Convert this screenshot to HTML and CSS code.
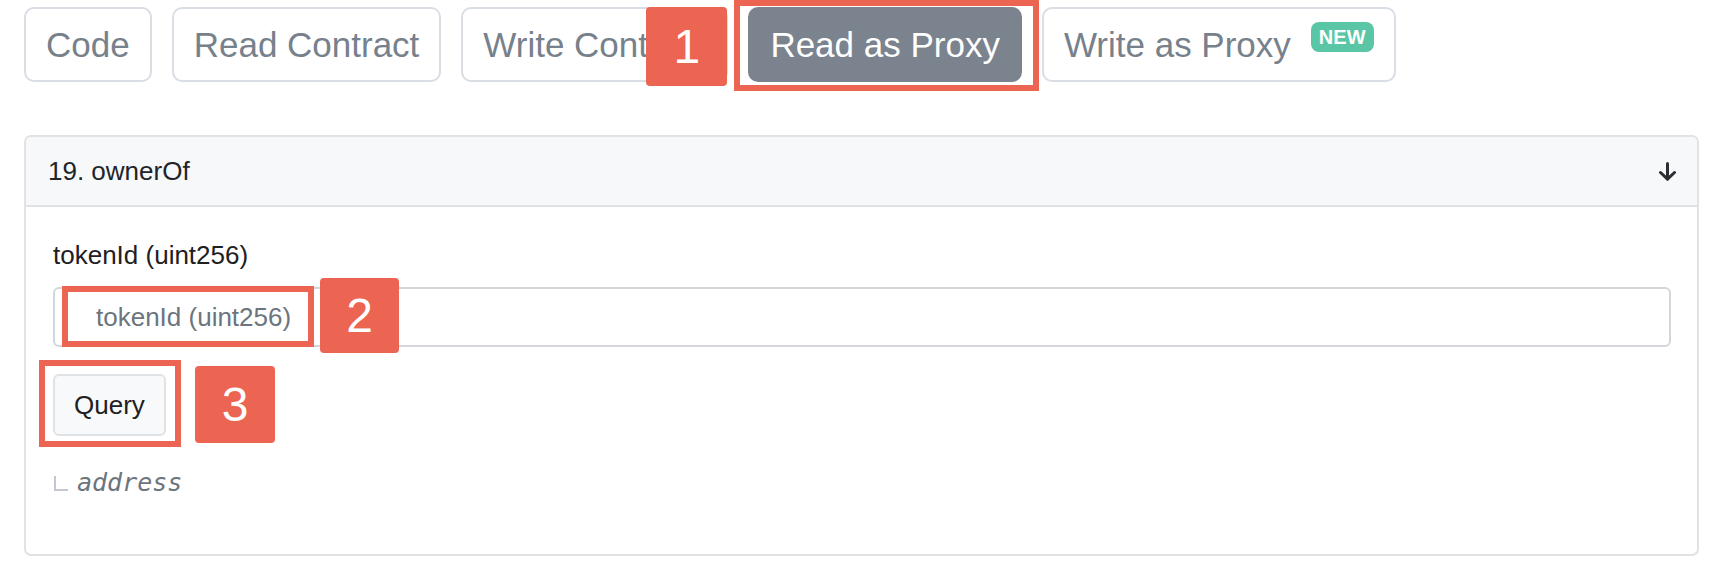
FILE: index.html
```html
<!DOCTYPE html>
<html lang="en">
<head>
<meta charset="utf-8">
<title>Read as Proxy</title>
<link rel="stylesheet" href="styles.css">
</head>
<body>
  <nav class="tabs">
    <button class="tab">Code</button>
    <button class="tab">Read Contract</button>
    <div class="tab-wrap">
      <button class="tab">Write Contract</button>
      <span class="marker marker-1">1</span>
    </div>
    <div class="tab-wrap">
      <button class="tab tab-active">Read as Proxy</button>
      <span class="hl hl-1"></span>
    </div>
    <button class="tab">Write as Proxy <span class="new">NEW</span></button>
  </nav>

  <section class="card">
    <header class="card-head">
      <span class="card-title">19. ownerOf</span>
      <svg class="arrow" width="19" height="19" viewBox="0 0 19 19" aria-hidden="true">
        <path d="M9.5 1.5 V17" fill="none" stroke="#2b2f33" stroke-width="3" stroke-linecap="round"/>
        <path d="M2.5 10.5 L9.5 17.2 L16.5 10.5" fill="none" stroke="#2b2f33" stroke-width="3" stroke-linecap="round" stroke-linejoin="round"/>
      </svg>
    </header>
    <div class="card-body">
      <label class="field-label">tokenId (uint256)</label>
      <div class="field-wrap">
        <input class="field" type="text" placeholder="tokenId (uint256)">
        <span class="hl hl-2"></span>
        <span class="marker marker-2">2</span>
      </div>
      <div class="query-row">
        <div class="query-wrap">
          <button class="query">Query</button>
          <span class="hl hl-3"></span>
          <span class="marker marker-3">3</span>
        </div>
      </div>
      <div class="output">
        <span class="elbow"></span><span class="type">address</span>
      </div>
    </div>
  </section>
</body>
</html>
```

FILE: styles.css
```css
* { box-sizing: border-box; }

body {
  margin: 0;
  background: #ffffff;
  font-family: "Liberation Sans", Arial, sans-serif;
  color: #212529;
}

.tabs {
  display: flex;
  align-items: flex-start;
  gap: 20px;
  padding: 7px 0 0 24px;
}

.tab-wrap {
  position: relative;
  display: flex;
}

.tab {
  display: inline-flex;
  align-items: center;
  height: 75px;
  padding: 0 20px;
  border: 2px solid #d9dde4;
  border-radius: 10px;
  background: #ffffff;
  color: #77818c;
  font-family: "Liberation Sans", Arial, sans-serif;
  font-size: 35px;
  white-space: nowrap;
}

.tab-active {
  background: #7b838e;
  border-color: #7b838e;
  color: #ffffff;
}

.new {
  align-self: flex-start;
  margin: 13px 0 0 20px;
  height: 30px;
  padding: 0 8px;
  border-radius: 8px;
  background: #5bc6a5;
  color: #ffffff;
  font-size: 20px;
  font-weight: bold;
  line-height: 30px;
}

.marker {
  position: absolute;
  display: flex;
  align-items: center;
  justify-content: center;
  width: 80px;
  height: 77px;
  border-radius: 4px;
  background: #ec6452;
  color: #ffffff;
  font-size: 48px;
  line-height: 1;
}

.marker-1 { right: 1px; top: 0; width: 81px; height: 79px; }
.marker-2 { left: 267px; top: -9px; width: 79px; height: 75px; }
.marker-3 { left: 142px; top: -8px; }

.hl {
  position: absolute;
  border: 6px solid #ec6452;
  pointer-events: none;
}

.hl-1 { left: -14px; top: -7px; right: -17px; bottom: -9px; }
.hl-2 { left: 9px; top: -1px; width: 252px; height: 61px; }
.hl-3 { left: -14px; top: -14px; width: 142px; height: 87px; }

.card {
  margin: 53px 23px 0 24px;
  border: 2px solid #e0e2e5;
  border-radius: 7px;
  overflow: visible;
}

.card-head {
  display: flex;
  align-items: center;
  justify-content: space-between;
  height: 70px;
  padding: 0 20px 0 22px;
  background: #f7f8f9;
  border-bottom: 2px solid #e0e2e5;
  border-radius: 5px 5px 0 0;
}

.card-title {
  font-size: 26px;
  color: #212529;
}

.arrow { display: block; margin-top: 1px; }

.card-body {
  padding: 29px 26px 52px 27px;
}

.field-label {
  display: block;
  font-size: 26px;
  line-height: 39px;
  color: #1e2022;
  margin-bottom: 12px;
}

.field-wrap {
  position: relative;
}

.field {
  display: block;
  width: 100%;
  height: 60px;
  padding: 0 0 0 41px;
  border: 2px solid #d3d7dc;
  border-radius: 6px;
  font-family: "Liberation Sans", Arial, sans-serif;
  font-size: 26px;
  color: #495057;
  background: #ffffff;
}

.field::placeholder { color: #6c757d; }

.query-row {
  display: flex;
  margin-top: 27px;
}

.query-wrap {
  position: relative;
}

.query {
  display: block;
  height: 62px;
  padding: 0 19px;
  border: 2px solid #e0e3e6;
  border-radius: 6px;
  background: #f8f9fa;
  color: #1e2022;
  font-family: "Liberation Sans", Arial, sans-serif;
  font-size: 26px;
}

.output {
  display: flex;
  align-items: baseline;
  margin-top: 28px;
  line-height: 38px;
}

.elbow {
  display: inline-block;
  width: 14px;
  height: 15px;
  margin: 0 9px 0 1px;
  border-left: 2px solid #c3c8d0;
  border-bottom: 2px solid #c3c8d0;
}

.type {
  font-family: "DejaVu Sans Mono", "Liberation Mono", monospace;
  font-style: italic;
  font-size: 25px;
  color: #6c757d;
}
```
